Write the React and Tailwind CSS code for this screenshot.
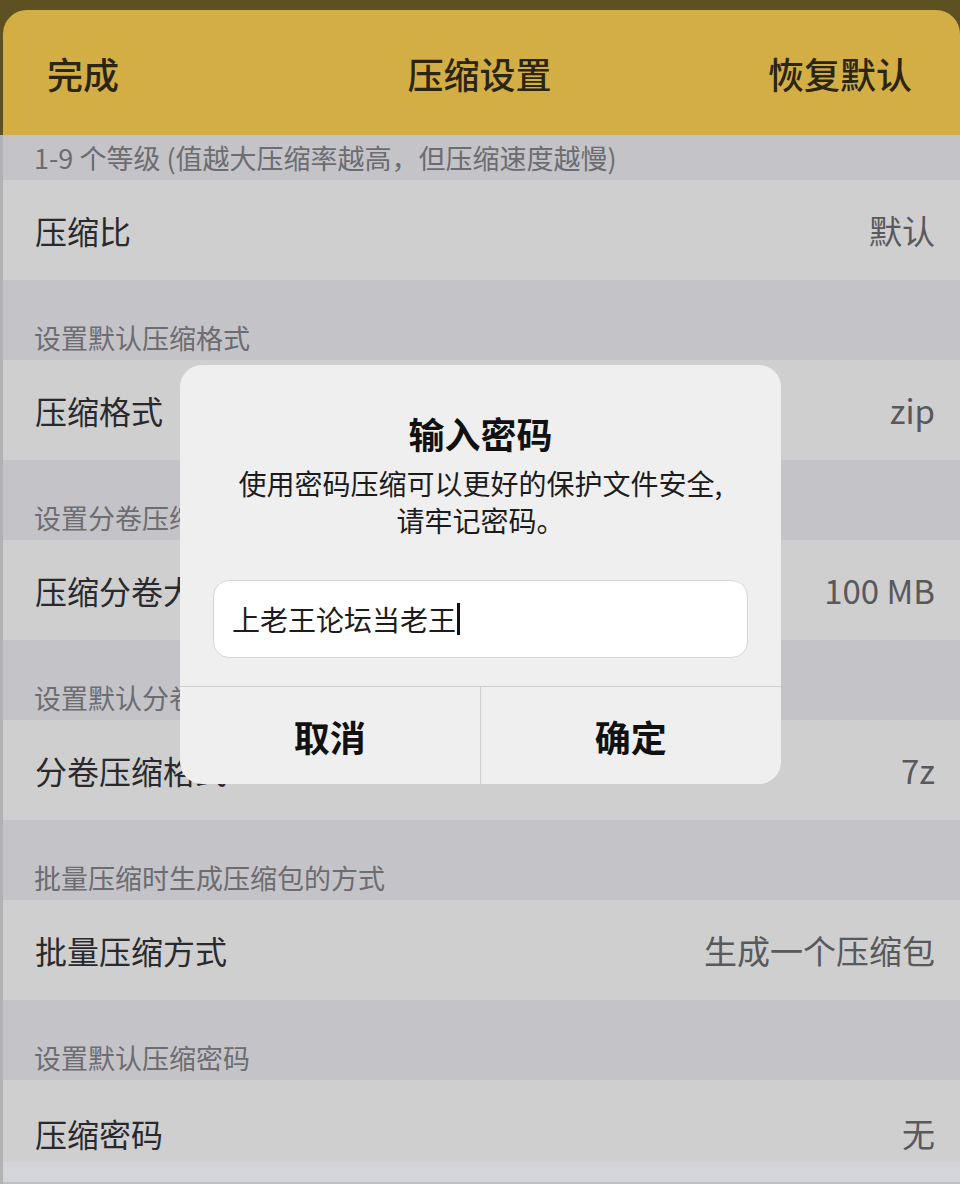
import React from "react";

const font = { fontFamily: '"Noto Sans CJK SC", "Noto Sans", sans-serif' };

const sections = [
  { note: "设置默认压缩格式", label: "压缩格式", value: "zip" },
  { note: "设置分卷压缩大小", label: "压缩分卷大小", value: "100 MB" },
  { note: "设置默认分卷压缩格式", label: "分卷压缩格式", value: "7z" },
  { note: "批量压缩时生成压缩包的方式", label: "批量压缩方式", value: "生成一个压缩包" },
];

function Row({ label, value }) {
  return (
    <div className="h-[100px] flex items-center justify-between pl-[32px] pr-[25px] bg-[#cfcfcf]">
      <span className="text-[32px] leading-[44px] text-[#2a2a2e]">{label}</span>
      <span className="text-[33px] leading-[44px] text-[#59595d]">{value}</span>
    </div>
  );
}

function Note({ children }) {
  return (
    <div className="h-[80px] flex items-end pb-[5px] pl-[31px] bg-[#c4c3c8]">
      <span className="text-[27px] leading-[34px] text-[#6c6c71]">{children}</span>
    </div>
  );
}

export default function App() {
  return (
    <div className="relative w-[960px] h-[1184px] overflow-hidden bg-[#5e5121]" style={font}>
      {/* status bar remnant */}
      <div className="h-[10px]" />

      {/* Header */}
      <header className="ml-[3px] h-[125px] rounded-t-[24px] bg-[#d2ae45] grid grid-cols-3 items-center pl-[44px] pr-[48px] text-[#2b2512]">
        <span className="text-[36px] font-medium">完成</span>
        <span className="text-[36px] font-medium text-center">压缩设置</span>
        <span className="text-[36px] font-medium text-right">恢复默认</span>
      </header>

      {/* Settings list */}
      <div className="border-l-[3px] border-[#b3b3b6] bg-[#cfcfcf]">
        <div className="h-[45px] flex items-center pl-[31px] bg-[#c4c3c8]">
          <span className="text-[27px] leading-[34px] text-[#6c6c71]">1-9 个等级 (值越大压缩率越高，但压缩速度越慢)</span>
        </div>
        <Row label="压缩比" value="默认" />

        {sections.map((s) => (
          <div key={s.label}>
            <Note>{s.note}</Note>
            <Row label={s.label} value={s.value} />
          </div>
        ))}

        <Note>设置默认压缩密码</Note>
        <div className="h-[82px] flex items-center justify-between pt-[24px] pl-[32px] pr-[25px] bg-[#cfcfcf]">
          <span className="text-[32px] leading-[44px] text-[#2a2a2e]">压缩密码</span>
          <span className="text-[33px] leading-[44px] text-[#59595d]">无</span>
        </div>
        <div className="h-[22px] bg-[#d3d5da] border-b-[2px] border-[#c0c0c4]" />
      </div>

      {/* Password alert */}
      <div className="absolute left-[180px] top-[365px] w-[601px] h-[419px] rounded-[22px] bg-[#efeff0] flex flex-col">
        <div className="pt-[46px] text-center text-[36px] leading-[44px] font-semibold text-[#111]">输入密码</div>
        <div className="mt-[10px] text-center text-[28px] leading-[37px] text-[#1c1c1e]">
          使用密码压缩可以更好的保护文件安全,
          <br />
          请牢记密码。
        </div>
        <div className="mt-[41px] mx-[33px] h-[78px] rounded-[16px] bg-white border border-[#d6d6d8] flex items-center pl-[18px]">
          <span className="text-[28px] leading-[36px] text-[#1c1c1e]">上老王论坛当老王</span>
          <span className="ml-[1px] w-[3px] h-[32px] bg-[#111]" />
        </div>
        <div className="mt-auto h-[98px] border-t border-[#cfcfd1] grid grid-cols-2">
          <div className="flex items-center justify-center border-r border-[#cfcfd1] text-[36px] font-semibold text-[#111]">取消</div>
          <div className="flex items-center justify-center text-[36px] font-semibold text-[#111]">确定</div>
        </div>
      </div>
    </div>
  );
}
